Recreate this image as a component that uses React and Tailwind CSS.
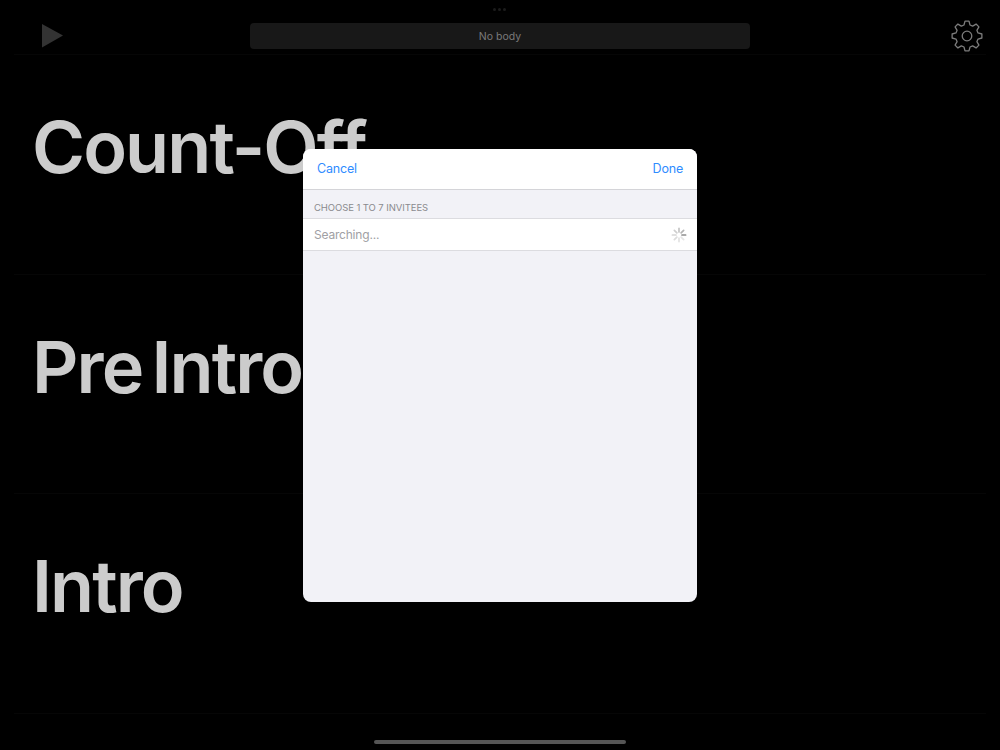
import React from 'react';

const sections = ['Count-Off', 'Pre Intro', 'Intro'];

// builds the cog outline, 8 teeth
const gearPath = () => {
  const teeth = 8;
  const outer = 15;
  const inner = 11.4;
  const pts = [];
  for (let i = 0; i < teeth; i++) {
    const a = (i * 2 * Math.PI) / teeth - Math.PI / 2;
    const step = (2 * Math.PI) / teeth;
    [[-0.34, inner], [-0.17, outer], [0.17, outer], [0.34, inner]].forEach(([k, r]) => {
      const t = a + k * step;
      pts.push(`${(16 + r * Math.cos(t)).toFixed(2)} ${(16 + r * Math.sin(t)).toFixed(2)}`);
    });
  }
  return `M${pts.join('L')}Z`;
};

function Gear() {
  return (
    <svg width="32" height="32" viewBox="0 0 32 32" fill="none" stroke="#7c7c7c" strokeWidth="1.3" strokeLinejoin="round">
      <path d={gearPath()} />
      <circle cx="16" cy="16" r="4.8" />
    </svg>
  );
}

function Spinner() {
  const shades = ['#8e8e8e', '#e6e6e6', '#e2e2e2', '#dcdcdc', '#d6d6d6', '#cfcfcf', '#c4c4c4', '#b4b4b4'];
  return (
    <svg width="16" height="16" viewBox="0 0 16 16" strokeWidth="1.7" strokeLinecap="round">
      {shades.map((c, i) => (
        <line key={i} x1="11" y1="8" x2="14.6" y2="8" stroke={c} transform={`rotate(${i * 45} 8 8)`} />
      ))}
    </svg>
  );
}

export default function App() {
  return (
    <div className="relative flex h-[750px] w-[1000px] flex-col overflow-hidden bg-black font-['Inter',sans-serif]">
      <div className="absolute left-[493px] top-[8px] flex gap-[2px]">
        <div className="h-[3px] w-[3px] rounded-full bg-[#1c1c1c]" />
        <div className="h-[3px] w-[3px] rounded-full bg-[#1c1c1c]" />
        <div className="h-[3px] w-[3px] rounded-full bg-[#1c1c1c]" />
      </div>

      <div className="mx-[14px] flex h-[55px] shrink-0 items-start border-b border-[#060606] pt-[23px]">
        <svg width="24" height="26" viewBox="0 0 24 26" className="ml-[27px]">
          <polygon points="1,1 22,12.5 1,24.5" fill="#333333" />
        </svg>
        <div className="ml-[185px] flex h-[26px] w-[500px] items-center justify-center rounded-[4px] bg-[#181818] pt-[1px] text-[10.5px] text-[#7a7a7a]">
          No body
        </div>
        <div className="ml-[201px] -mt-[3px]">
          <Gear />
        </div>
      </div>

      {sections.map((name) => (
        <div key={name} className="mx-[14px] h-[219.5px] shrink-0 border-b border-[#060606] pl-[18px] pt-[56px]">
          <div className="text-[72px] font-semibold leading-[72px] tracking-[-1.9px] [word-spacing:-7px] text-[#cccccc]">{name}</div>
        </div>
      ))}

      <div className="absolute left-[374px] top-[740px] h-[4px] w-[252px] rounded-full bg-[#555555]" />

      <div className="absolute left-[303px] top-[149px] flex h-[453px] w-[394px] flex-col overflow-hidden rounded-[8px] bg-[#f2f2f7]">
        <div className="flex h-[41px] shrink-0 items-center justify-between border-b border-[#d4d4d8] bg-white px-[14px] pt-[1px]">
          <span className="text-[12.5px] tracking-[-0.2px] text-[#2f8cff]">Cancel</span>
          <span className="text-[12.5px] tracking-[-0.2px] text-[#2f8cff]">Done</span>
        </div>
        <div className="flex h-[28px] shrink-0 items-end px-[11px] pb-[4px] text-[9.5px] leading-[12px] tracking-[-0.08px] text-[#8a8a8e]">
          CHOOSE 1 TO 7 INVITEES
        </div>
        <div className="flex h-[33px] shrink-0 items-center justify-between border-y border-[#dcdce0] bg-white pl-[11px] pr-[10px]">
          <span className="pt-[1px] text-[12px] tracking-[-0.2px] text-[#a0a0a4]">Searching...</span>
          <Spinner />
        </div>
      </div>
    </div>
  );
}
